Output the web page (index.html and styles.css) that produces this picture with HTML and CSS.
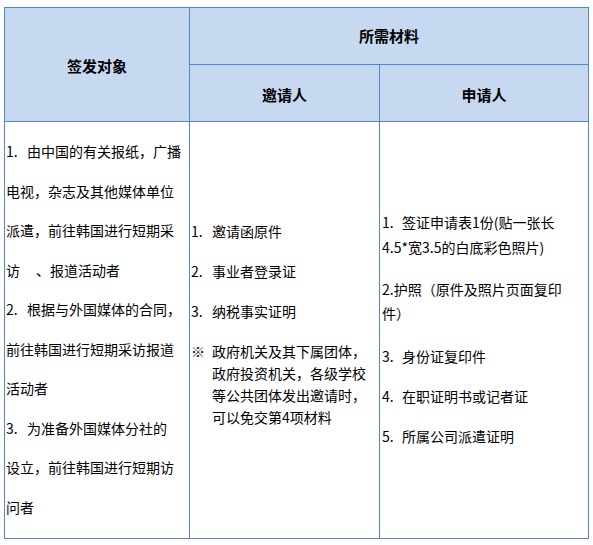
FILE: index.html
```html
<!DOCTYPE html>
<html lang="zh-CN">
<head>
<meta charset="utf-8">
<title>签发对象与所需材料</title>
<link rel="stylesheet" href="styles.css">
</head>
<body>
<table class="visa">
  <colgroup>
    <col class="c1">
    <col class="c2">
    <col class="c3">
  </colgroup>
  <tr class="h1">
    <th rowspan="2" class="th-main">签发对象</th>
    <th colspan="2">所需材料</th>
  </tr>
  <tr class="h2">
    <th>邀请人</th>
    <th>申请人</th>
  </tr>
  <tr class="body">
    <td class="target">
      <span class="n">1.</span>由中国的有关报纸，广播<br>电视，杂志及其他媒体单位<br>派遣，前往韩国进行短期采<br>访<span class="gap"></span>、报道活动者<br><span class="n">2.</span>根据与外国媒体的合同，<br>前往韩国进行短期采访报道<br>活动者<br><span class="n">3.</span>为准备外国媒体分社的<br>设立，前往韩国进行短期访<br>问者
    </td>
    <td class="inviter">
      <p><span class="n">1.</span>邀请函原件</p>
      <p><span class="n">2.</span>事业者登录证</p>
      <p><span class="n">3.</span>纳税事实证明</p>
      <p class="note"><span class="mark">※</span>政府机关及其下属团体，<br>政府投资机关，各级学校<br>等公共团体发出邀请时，<br>可以免交第4项材料</p>
    </td>
    <td class="applicant">
      <p class="a1"><span class="n2">1.</span>签证申请表1份(贴一张长<br>4.5*宽3.5的白底彩色照片)</p>
      <p class="a2">2.护照（原件及照片页面复印<br>件）</p>
      <p class="a3"><span class="n2">3.</span>身份证复印件</p>
      <p class="a4"><span class="n2">4.</span>在职证明书或记者证</p>
      <p class="a5"><span class="n2">5.</span>所属公司派遣证明</p>
    </td>
  </tr>
</table>
</body>
</html>
```

FILE: styles.css
```css
html, body {
  margin: 0;
  padding: 0;
  background: #ffffff;
}

body {
  font-family: "Noto Sans CJK SC", "Noto Sans", sans-serif;
  font-size: 14px;
  color: #000000;
}

.visa {
  margin: 7px 0 0 4px;
  width: 584px;
  table-layout: fixed;
  border-collapse: collapse;
}

.c1 { width: 185px; }
.c2 { width: 190px; }
.c3 { width: 209px; }

.visa th,
.visa td {
  border: 1px solid #4f88d0;
  padding: 0;
}

.visa th {
  background: #c6d9f1;
  font-size: 15px;
  font-weight: bold;
  text-align: center;
  vertical-align: middle;
  line-height: 20px;
}

.visa .h1 th {
  height: 56px;
}

.visa .h2 th {
  height: 52px;
  padding-top: 4px;
}

.visa .th-main {
  padding-top: 2px;
}

.visa td {
  vertical-align: top;
  white-space: nowrap;
  text-align: left;
}

.visa .target {
  padding: 10px 0 11px 1px;
  line-height: 39.5px;
}

.n {
  display: inline-block;
  width: 21px;
}

.n2 {
  display: inline-block;
  width: 20px;
}

.gap {
  display: inline-block;
  width: 16px;
}

.visa .inviter {
  padding: 98px 0 0 1px;
}

.inviter p {
  margin: 0 0 18px 0;
  line-height: 22px;
}

.inviter .note {
  padding-left: 21px;
  text-indent: -21px;
}

.mark {
  display: inline-block;
  width: 21px;
  text-indent: 0;
}

.visa .applicant {
  padding: 88px 0 0 2px;
}

.applicant p {
  margin: 0;
}

.applicant .a1 {
  line-height: 25px;
}

.applicant .a2 {
  line-height: 24px;
  margin-top: 17px;
}

.applicant .a3 {
  line-height: 22px;
  margin-top: 20px;
}

.applicant .a4,
.applicant .a5 {
  line-height: 22px;
  margin-top: 18px;
}
```
